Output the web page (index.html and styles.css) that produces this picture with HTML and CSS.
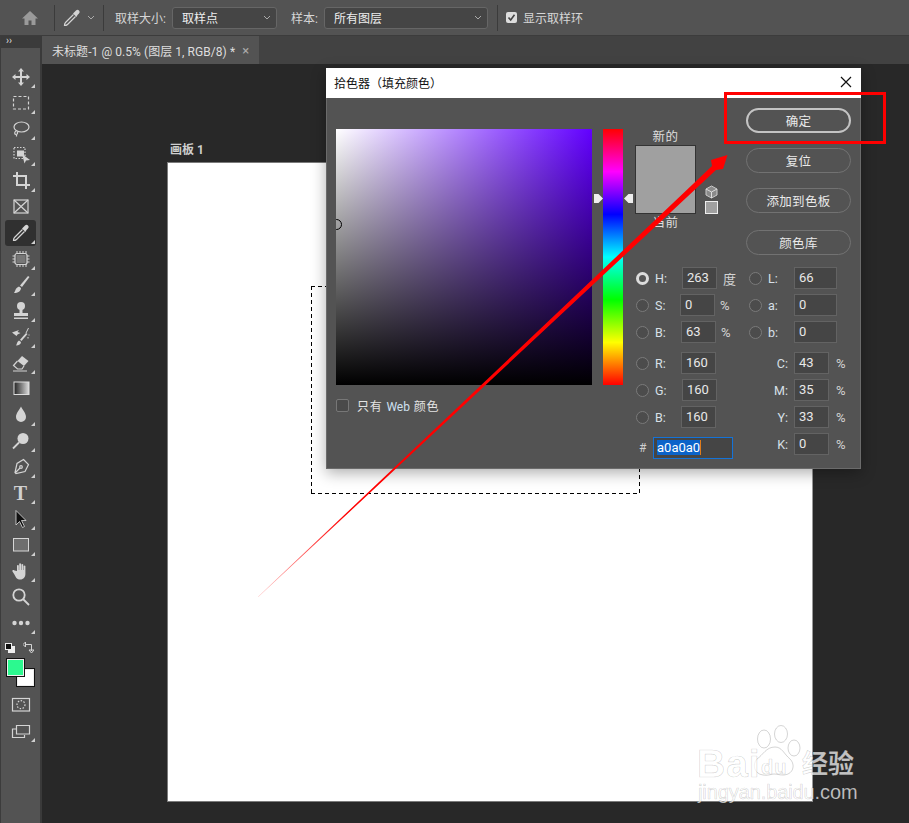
FILE: index.html
```html
<!DOCTYPE html>
<html lang="zh">
<head>
<meta charset="utf-8">
<title>拾色器</title>
<link rel="stylesheet" href="styles.css">
</head>
<body>
<svg class="defs" width="0" height="0"><defs>
<linearGradient id="gradTool" x1="0" x2="1" y1="0" y2="0"><stop offset="0" stop-color="#222"/><stop offset="1" stop-color="#ddd"/></linearGradient>
<linearGradient id="arrowFade" gradientUnits="userSpaceOnUse" x1="258" y1="597" x2="345" y2="515"><stop offset="0" stop-color="#f00" stop-opacity=".25"/><stop offset="1" stop-color="#f00"/></linearGradient>
</defs></svg>

<header class="options">
  <div class="opt-home"><svg width="18" height="16" viewBox="0 0 18 16"><path class="dim" d="M9 1 1 8.500h2.500V15h4v-4.500h3V15h4V8.500H17z"/></svg></div>
  <i class="sep"></i>
  <div class="opt-tool">
    <svg width="20" height="20" viewBox="0 0 20 20"><path class="ln" d="M11.500 6.500 3.500 14.500c-.7.7-1 2-1 3 1 0 2.300-.3 3-1L13.500 8.500"/><path class="fl" d="M11 5.500 14.500 9 15.500 7 17 5.500a2 2 0 0 0-3-3L12.500 4z"/></svg>
    <svg width="8" height="6" viewBox="0 0 8 6"><path class="chev" d="M1 1 4 4 7 1"/></svg>
  </div>
  <i class="sep"></i>
  <span class="opt-label first">取样大小:</span>
  <div class="select size-a"><span>取样点</span><svg width="8" height="6" viewBox="0 0 8 6"><path class="chev" d="M1 1 4 4 7 1"/></svg></div>
  <span class="opt-label second">样本:</span>
  <div class="select size-b"><span>所有图层</span><svg width="8" height="6" viewBox="0 0 8 6"><path class="chev" d="M1 1 4 4 7 1"/></svg></div>
  <i class="sep third"></i>
  <span class="check"><svg width="9" height="9" viewBox="0 0 9 9"><path d="M1.500 4.500 3.700 7 7.500 1.800" fill="none" stroke="#444" stroke-width="1.600"/></svg></span>
  <span class="opt-label check-label">显示取样环</span>
</header>

<div class="main">
  <aside class="toolbar">
    <div class="tb-head">››</div>
    <div class="tb-grip"></div>
    <div class="tool c"><svg viewBox="0 0 20 20"><path class="fl" d="M10 1 13 4.500H11V9h4.500V7L19 10l-3.500 3v-2H11v4.500h2L10 19l-3-3.500h2V11H4.500v2L1 10l3.500-3v2H9V4.500H7z"/></svg></div>
    <div class="tool c"><svg viewBox="0 0 20 20"><rect class="ln dash" x="2.500" y="3.500" width="15" height="12.500"/></svg></div>
    <div class="tool c"><svg viewBox="0 0 20 20"><ellipse class="ln" cx="10.500" cy="8" rx="7.500" ry="5"/><path class="ln" d="M5 12c-2 1-1.500 3.500 0 3.500s2-1.500 1-3M5.500 15v2.500"/></svg></div>
    <div class="tool c"><svg viewBox="0 0 20 20"><rect class="ln dot" x="3" y="2.500" width="11" height="11"/><rect class="fl" x="6" y="5.500" width="7" height="6"/><path class="fl" d="M11 9 19 15l-4 .5-1.500 3z"/></svg></div>
    <div class="tool c"><svg viewBox="0 0 20 20"><path class="fl" d="M1 4h3V1h2v3h9v9h3v2h-3v3h-2v-3H4V6H1zm5 2v7h7V6z" transform="translate(1 0)"/></svg></div>
    <div class="tool"><svg viewBox="0 0 20 20"><rect class="ln" x="3" y="3" width="14" height="13"/><path class="ln" d="M3 3 17 16M17 3 3 16"/></svg></div>
    <div class="tool c active"><svg viewBox="0 0 20 20"><path class="ln" d="M11.500 6.500 3.500 14.500c-.7.7-1 2-1 3 1 0 2.300-.3 3-1L13.500 8.500"/><path class="fl" d="M11 5.500 14.500 9 15.500 7 17 5.500a2 2 0 0 0-3-3L12.500 4z"/></svg></div>
    <div class="tool c"><svg viewBox="0 0 20 20"><rect class="ln" x="4" y="4.500" width="12" height="11" rx="2"/><rect class="patch" x="5.500" y="6" width="9" height="8"/><path class="ln thin" d="M6 2v2.500M9 2v2.500M12 2v2.500M15 2v2.500M6 15.500V18M9 15.500V18M12 15.500V18M15 15.500V18M1.500 7H4M1.500 10H4M1.500 13H4M16 7h2.500M16 10h2.500M16 13h2.500"/></svg></div>
    <div class="tool c"><svg viewBox="0 0 20 20"><path class="fl" d="M17 1 18.500 2 11 12 9 10.500z"/><path class="fl" d="M8 11.500 10 13c0 3-3 5-7 5 1.500-1.500 1-5 5-6.500z"/></svg></div>
    <div class="tool c"><svg viewBox="0 0 20 20"><circle class="fl" cx="10" cy="5" r="4"/><rect class="fl" x="8.500" y="8" width="3" height="4"/><path class="fl" d="M3 12h14v3H3zM3 16.500h14V18H3z"/></svg></div>
    <div class="tool c"><svg viewBox="0 0 20 20"><path class="fl" d="M15 6 16.500 7 10.500 14 9 12.700z"/><path class="fl" d="M8 13.500 10 15c0 2-2 3.500-5 3.500 1-1.500 1-4 3-5z"/><path class="ln thin" d="M17.500 1 15 6M17 10v1.500M18 7.500v1"/><path class="fl" d="M1 5.500 8 3 6.500 5l3 1-3 1.500L5.500 9z"/></svg></div>
    <div class="tool c"><svg viewBox="0 0 20 20"><path class="fl" d="M11 3 17.500 8 13 13 6.500 8z"/><path class="ln" d="M6.500 8 2.500 12.500 6.500 16H11L13 13M2 18h14"/></svg></div>
    <div class="tool"><svg viewBox="0 0 20 20"><rect x="3" y="3" width="15" height="12.500" fill="url(#gradTool)" stroke="#ddd" stroke-width="1"/></svg></div>
    <div class="tool c"><svg viewBox="0 0 20 20"><path class="fl" d="M10 1.500C8.500 5 5 8 5 12a5 5 0 0 0 10 0c0-4-3.500-7-5-10.500z"/></svg></div>
    <div class="tool c"><svg viewBox="0 0 20 20"><circle class="fl" cx="12" cy="7.500" r="5.500"/><path class="ln wide" d="M8 11.500 2 17.500"/></svg></div>
    <div class="tool c"><svg viewBox="0 0 20 20"><path class="ln" d="M12.500 2.500 17.500 7.500 14 14.500 5 16.500 4 15.500 6 6.500zM4 16 9 11"/><circle class="ln" cx="10" cy="10" r="1.300"/></svg></div>
    <div class="tool c"><span class="t-glyph">T</span></div>
    <div class="tool c"><svg viewBox="0 0 20 20"><path d="M5 1.500V16l3.500-3.500 3 6 2-1-3-6H15z" fill="#111" stroke="#ddd" stroke-width=".8"/></svg></div>
    <div class="tool c"><svg viewBox="0 0 20 20"><rect x="2.500" y="3.500" width="15" height="12.500" fill="#6e6e6e" stroke="#d6d6d6" stroke-width="1"/></svg></div>
    <div class="tool c"><svg viewBox="0 0 20 20"><path class="fl" d="M6 10V4.500a1 1 0 0 1 1.800 0V9h.4V2.800a1 1 0 0 1 1.800 0V9h.4V3.500a1 1 0 0 1 1.800 0V9h.4V5a1 1 0 0 1 1.800 0v8c0 3-2 5.500-5 5.500-3.500 0-4.500-2-6-5L1.500 10.500c-.7-1.300 1-2 2-1z"/></svg></div>
    <div class="tool"><svg viewBox="0 0 20 20"><circle class="ln wide" cx="8" cy="8" r="5.700"/><path class="ln wide" d="M12 12 18 18"/></svg></div>
    <div class="tool c"><svg viewBox="0 0 20 20"><circle class="fl" cx="3.500" cy="10" r="2.200"/><circle class="fl" cx="10" cy="10" r="2.200"/><circle class="fl" cx="16.500" cy="10" r="2.200"/></svg></div>
    <div class="colors">
      <div class="color-ctl">
        <svg width="10" height="10" viewBox="0 0 10 10"><rect x="3" y="3" width="7" height="7" fill="#eee"/><rect x=".5" y=".5" width="6" height="6" fill="#111" stroke="#eee"/></svg>
        <svg width="11" height="11" viewBox="0 0 11 11"><path class="ln thin" d="M2 2.500h6.500V9M0 2.500 2.500 0v5zM6 8h5l-2.500 3z"/></svg>
      </div>
      <div class="swatches"><span class="bg-color"></span><span class="fg-color"></span></div>
    </div>
    <div class="tool"><svg viewBox="0 0 20 20"><rect class="ln" x="1.500" y="3.500" width="17" height="12.500"/><circle class="ln dot" cx="10" cy="9.700" r="4"/></svg></div>
    <div class="tool c"><svg viewBox="0 0 20 20"><path class="ln" d="M5 8h-3.500v8.500h12V14M5.500 4.500h13V13h-13z"/></svg></div>
  </aside>

  <div class="workspace">
    <div class="tabbar">
      <div class="tab"><span>未标题-1 @ 0.5% (图层 1, RGB/8) *</span><span class="tab-x">×</span></div>
    </div>
    <main class="canvas">
      <div class="board-label">画板 1</div>
      <div class="artboard"></div>
      <div class="marquee"></div>
      <section class="dialog">
        <div class="d-title"><span>拾色器（填充颜色）</span>
          <svg width="12" height="12" viewBox="0 0 12 12"><path d="M1 1 11 11M11 1 1 11" stroke="#111" stroke-width="1.200"/></svg>
        </div>
        <div class="d-body">
          <div class="field-col">
            <div class="sv-field"><i class="sv-mark"></i></div>
            <label class="web"><i class="box"></i><span>只有 <b>Web</b> 颜色</span></label>
          </div>
          <div class="hue"><i class="ptr ptr-l"></i><i class="ptr ptr-r"></i></div>
          <div class="right">
            <div class="top">
              <div class="preview">
                <div class="p-label">新的</div>
                <div class="p-swatch"></div>
                <div class="p-label after">当前</div>
              </div>
              <div class="gamut">
                <svg width="13" height="14" viewBox="0 0 13 14"><path d="M6.500 1 12 4v6l-5.500 3L1 10V4z" fill="#8a8a8a" stroke="#ccc"/><path d="M1 4 6.500 7 12 4M6.500 7v6" fill="none" stroke="#ddd"/></svg>
                <i class="g-swatch"></i>
              </div>
              <div class="buttons">
                <div class="btn primary">确定</div>
                <div class="btn">复位</div>
                <div class="btn">添加到色板</div>
                <div class="btn lib">颜色库</div>
              </div>
            </div>
            <div class="values">
              <div class="v-col v-left">
                <div class="row"><i class="radio on"></i><span class="lb w27">H:</span><span class="inp">263</span><span class="unit u6">度</span></div>
                <div class="row"><i class="radio"></i><span class="lb w25">S:</span><span class="inp">0</span><span class="unit">%</span></div>
                <div class="row"><i class="radio"></i><span class="lb w26">B:</span><span class="inp">63</span><span class="unit">%</span></div>
                <div class="row gap"><i class="radio"></i><span class="lb w26">R:</span><span class="inp">160</span></div>
                <div class="row"><i class="radio"></i><span class="lb w27">G:</span><span class="inp">160</span></div>
                <div class="row"><i class="radio"></i><span class="lb w26">B:</span><span class="inp">160</span></div>
                <div class="row gap hexrow"><span class="hash">#</span><span class="inp hex"><span class="sel">a0a0a0</span></span></div>
              </div>
              <div class="v-col v-right">
                <div class="row"><i class="radio"></i><span class="lb w32">L:</span><span class="inp long">66</span></div>
                <div class="row"><i class="radio"></i><span class="lb w32">a:</span><span class="inp long">0</span></div>
                <div class="row"><i class="radio"></i><span class="lb w32">b:</span><span class="inp long">0</span></div>
                <div class="row gap"><span class="lb cm">C:</span><span class="inp">43</span><span class="unit">%</span></div>
                <div class="row"><span class="lb cm">M:</span><span class="inp">35</span><span class="unit">%</span></div>
                <div class="row"><span class="lb cm">Y:</span><span class="inp">33</span><span class="unit">%</span></div>
                <div class="row"><span class="lb cm">K:</span><span class="inp">0</span><span class="unit">%</span></div>
              </div>
            </div>
          </div>
        </div>
      </section>
    </main>
  </div>
</div>

<div class="redbox"></div>
<svg class="arrow" width="909" height="823" viewBox="0 0 909 823"><polygon fill="url(#arrowFade)" points="258,596.800 712,166 711,160 727.500,155 723,169 716,170 258.300,597"/></svg>

<div class="wm">
  <svg class="paw" width="52" height="56" viewBox="0 0 52 56"><g class="paw-g"><ellipse cx="13" cy="15" rx="6.500" ry="9"/><ellipse cx="30" cy="10" rx="6.500" ry="8.500"/><ellipse cx="43" cy="24" rx="6" ry="8"/><path d="M24 23c7 0 9 7 15 12 6 6 3 16-7 16-4 0-6-1-9-1s-6 2-11 1C3 50 1 40 6 35c6-4 9-12 18-12z"/></g></svg>
  <span class="wm-bai">Bai</span><span class="wm-du">du</span><span class="wm-cn">经验</span>
  <span class="wm-url">jingyan.baidu.com</span>
</div>
</body>
</html>
```
FILE: styles.css
```css
* { box-sizing: border-box; }
html, body { margin: 0; height: 100%; }
body {
  width: 909px; height: 823px; overflow: hidden; position: relative;
  background: #282828; color: #dcdcdc;
  font: 12px Roboto, "Noto Sans CJK SC", sans-serif;
}
.defs { position: absolute; }
i { display: block; font-style: normal; }

.ln { fill: none; stroke: #d4d4d4; stroke-width: 1.200; }
.ln.thin { stroke-width: 1; }
.ln.wide { stroke-width: 1.800; }
.ln.dash { stroke-dasharray: 3 2; }
.ln.dot { stroke-dasharray: 1.500 1.500; }
.fl { fill: #d4d4d4; }
.dim { fill: #9a9a9a; }
.patch { fill: #777; }
.chev { fill: none; stroke: #aaa; stroke-width: 1; }

/* options bar */
.options { height: 36px; background: #535353; border-bottom: 1px solid #3c3c3c; display: flex; align-items: center; color: #d6d6d6; }
.opt-home { width: 54px; display: flex; justify-content: center; padding-left: 5px; }
.sep { width: 1px; height: 26px; background: #3b3b3b; flex: none; }
.opt-tool { width: 48px; display: flex; align-items: center; padding-left: 7px; gap: 5px; }
.opt-label { white-space: nowrap; }
.opt-label.first { margin-left: 11px; width: 57px; }
.opt-label.second { margin-left: 14px; width: 33px; }
.select { height: 22px; background: #454545; border: 1px solid #666; border-radius: 3px; display: flex; align-items: center; justify-content: space-between; padding: 0 5px 0 9px; color: #eee; }
.size-a { width: 105px; }
.size-b { width: 164px; }
.sep.third { margin-left: 9px; }
.check { width: 11px; height: 11px; background: #ddd; border-radius: 2px; margin-left: 8px; display: flex; align-items: center; justify-content: center; }
.check-label { margin-left: 6px; }

.main { display: flex; height: 787px; }

/* toolbar */
.toolbar { width: 42px; flex: none; background: #535353; border-left: 1px solid #3c3c3c; border-right: 2px solid #3a3a3a; display: flex; flex-direction: column; align-items: center; }
.tb-head { height: 12px; width: 100%; background: #3b3b3b; font-size: 10px; line-height: 9px; color: #ddd; padding-left: 5px; }
.tb-grip { height: 16px; width: 100%; }
.tool { width: 31px; height: 26px; flex: none; display: flex; align-items: center; justify-content: center; position: relative; border-radius: 3px; }
.tool svg { width: 20px; height: 20px; }
.tool.c::after { content: ""; position: absolute; right: 1px; bottom: 2px; border-left: 4px solid transparent; border-bottom: 4px solid #cfcfcf; }
.tool.active { background: #303030; }
.t-glyph { font: bold 20px "Liberation Serif", serif; color: #d0d0d0; }
.colors { width: 100%; height: 56px; padding: 6px 0 0 4px; display: flex; flex-direction: column; flex: none; }
.color-ctl { display: flex; justify-content: space-between; align-items: center; width: 29px; height: 11px; }
.swatches { position: relative; margin-top: 5px; width: 30px; height: 30px; }
.fg-color, .bg-color { position: absolute; width: 19px; height: 19px; border: 1px solid #111; outline: 1px solid #eee; outline-offset: -2px; }
.fg-color { left: 1px; top: 0; background: #2cf98f; }
.bg-color { left: 11px; top: 10px; background: #fff; }

/* workspace */
.workspace { flex: 1; display: flex; flex-direction: column; min-width: 0; }
.tabbar { height: 28px; background: #424242; flex: none; display: flex; }
.tab { width: 217px; background: #535353; display: flex; align-items: center; padding-left: 10px; color: #dedede; white-space: nowrap; letter-spacing: .06px; }
.tab-x { margin-left: 7px; color: #aaa; font-size: 13px; }
.canvas { flex: 1; position: relative; background: #282828; }

.board-label { position: absolute; left: 128px; top: 79px; font-size: 12px; font-weight: 700; color: #cfcfcf; line-height: 14px; }
.artboard { position: absolute; left: 125px; top: 98px; width: 646px; height: 640px; background: #fff; border: 1px solid #7b7b7b; border-right-color: #999; }
.marquee {
  position: absolute; left: 269px; top: 222px; width: 329px; height: 208px;
  background:
    repeating-linear-gradient(to right, #000 0 4px, transparent 4px 7px) top / 100% 1px no-repeat,
    repeating-linear-gradient(to right, #000 0 4px, transparent 4px 7px) bottom / 100% 1px no-repeat,
    repeating-linear-gradient(to bottom, #000 0 4px, transparent 4px 7px) left / 1px 100% no-repeat,
    repeating-linear-gradient(to bottom, #000 0 4px, transparent 4px 7px) right / 1px 100% no-repeat;
}

/* dialog */
.dialog { position: absolute; left: 284px; top: 4px; width: 535px; height: 401px; background: #535353; border: 1px solid #6b6b6b; border-top: 0; box-shadow: 0 4px 14px rgba(0,0,0,.32); color: #e0e0e0; }
.d-title { height: 30px; background: #fff; color: #111; display: flex; align-items: center; justify-content: space-between; padding: 0 9px 2px 8px; margin: 0 -1px; }
.d-body { display: flex; padding: 10px 0 0 9px; }
.field-col { margin-top: 21px; width: 256px; }
.sv-field { width: 256px; height: 256px; position: relative; overflow: hidden; background: linear-gradient(to top, #000, rgba(0,0,0,0)), linear-gradient(to right, #fff, hsl(263,100%,50%)); }
.sv-mark { position: absolute; left: -5px; top: 90px; width: 11px; height: 11px; border-radius: 50%; border: 1px solid #000; }
.web { display: flex; align-items: center; margin-top: 12px; height: 16px; letter-spacing: .8px; color: #e4e4e4; }
.web b { font-weight: 400; color: #cfe0f0; letter-spacing: 0; }
.box { width: 13px; height: 13px; border: 1px solid #777; border-radius: 2px; background: #4a4a4a; margin-right: 8px; }
.hue { margin: 21px 0 0 11px; width: 20px; height: 256px; position: relative; background: linear-gradient(to bottom, #f00 0, #f0f 16.67%, #00f 33.33%, #0ff 50%, #0f0 66.67%, #ff0 83.33%, #f00 100%); }
.ptr { position: absolute; top: 65px; width: 9px; height: 9px; background: #eee; }
.ptr-l { left: -9px; clip-path: polygon(0 0, 50% 0, 100% 50%, 50% 100%, 0 100%); }
.ptr-r { right: -10px; clip-path: polygon(100% 0, 50% 0, 0 50%, 50% 100%, 100% 100%); }

.right { margin-left: 12px; width: 216px; }
.top { display: flex; height: 159px; }
.preview { width: 61px; margin-top: 21px; display: flex; flex-direction: column; align-items: center; }
.p-label { height: 16px; line-height: 16px; font-size: 12.500px; letter-spacing: .5px; color: #dedede; }
.p-label.after { margin-top: 1px; }
.p-swatch { width: 61px; height: 69px; background: #a0a0a0; border: 1px solid #333; }
.gamut { margin: 77px 0 0 9px; width: 13px; display: flex; flex-direction: column; gap: 2px; }
.g-swatch { width: 13px; height: 13px; background: #a0a0a0; border: 1px solid #eee; }
.buttons { margin-left: auto; width: 105px; display: flex; flex-direction: column; gap: 15px; }
.btn { height: 25px; border: 1px solid #727272; border-radius: 13px; display: flex; align-items: center; justify-content: center; font-size: 12.500px; letter-spacing: .3px; color: #eaeaea; }
.btn.primary { border: 2px solid #c4c4c4; }
.btn.lib { margin-top: 2px; }

.values { display: flex; padding-left: 1px; }
.v-col { display: flex; flex-direction: column; gap: 5px; }
.v-left { width: 113px; }
.row { height: 22px; display: flex; align-items: center; flex: none; }
.row.gap { margin-top: 4px; }
.radio { width: 13px; height: 13px; border: 1px solid #7a7a7a; border-radius: 50%; background: #4c4c4c; flex: none; }
.radio.on { background: #555; border: 3.500px solid #dcdcdc; }
.lb { margin-left: 6px; color: #d8e0e8; font-size: 12.500px; }
.row .w27 { flex: 0 0 27px; }
.row .w25 { flex: 0 0 25px; }
.row .w26 { flex: 0 0 26px; }
.row .w32 { flex: 0 0 26px; }
.inp { width: 35px; height: 22px; background: #454545; border: 1px solid #636363; padding-left: 4px; line-height: 20px; color: #e8e8e8; font-size: 13px; }
.inp.long { width: 43px; }
.unit { margin-left: 5px; color: #d4d4d4; font-size: 13px; }
.unit.u6 { margin-left: 6px; }
.hexrow { padding-left: 3px; }
.hash { width: 14px; color: #cfcfcf; }
.inp.hex { width: 80px; border-color: #1473d8; padding-left: 3px; }
.sel { background: #0b63c9; color: #fff; border-right: 1px solid #e07b1a; display: inline-block; line-height: 15px; }
.lb.cm { flex: 0 0 45px; margin-left: 0; text-align: right; padding-right: 6px; }
.v-right .row:nth-child(n+4) .unit { margin-left: 7px; }

/* annotations */
.redbox { position: absolute; left: 724px; top: 92px; width: 162px; height: 52px; border: 3px solid #f00; }
.arrow { position: absolute; left: 0; top: 0; pointer-events: none; }

/* watermark */
.wm { position: absolute; left: 697px; top: 723px; width: 170px; height: 85px; color: rgba(255,255,255,.74); font-family: "Liberation Sans", sans-serif; }
.wm span { position: absolute; -webkit-text-stroke: .7px rgba(0,0,0,.17); white-space: nowrap; }
.wm-bai { left: 0; top: 25px; font-size: 39px; font-weight: 700; line-height: 32px; letter-spacing: 1px; }
.wm-du { left: 64px; top: 34px; font-size: 20px; font-weight: 700; line-height: 20px; letter-spacing: 1px; }
.wm-cn { left: 105px; top: 24px; font: 700 26px/30px "Noto Sans CJK SC", sans-serif; }
.wm-url { left: 1px; top: 59px; font-size: 20px; line-height: 20px; letter-spacing: -.1px; }
.paw { position: absolute; left: 54px; top: 1px; }
.paw-g > * { fill: rgba(255,255,255,.7); stroke: rgba(0,0,0,.17); stroke-width: 1; }
```
